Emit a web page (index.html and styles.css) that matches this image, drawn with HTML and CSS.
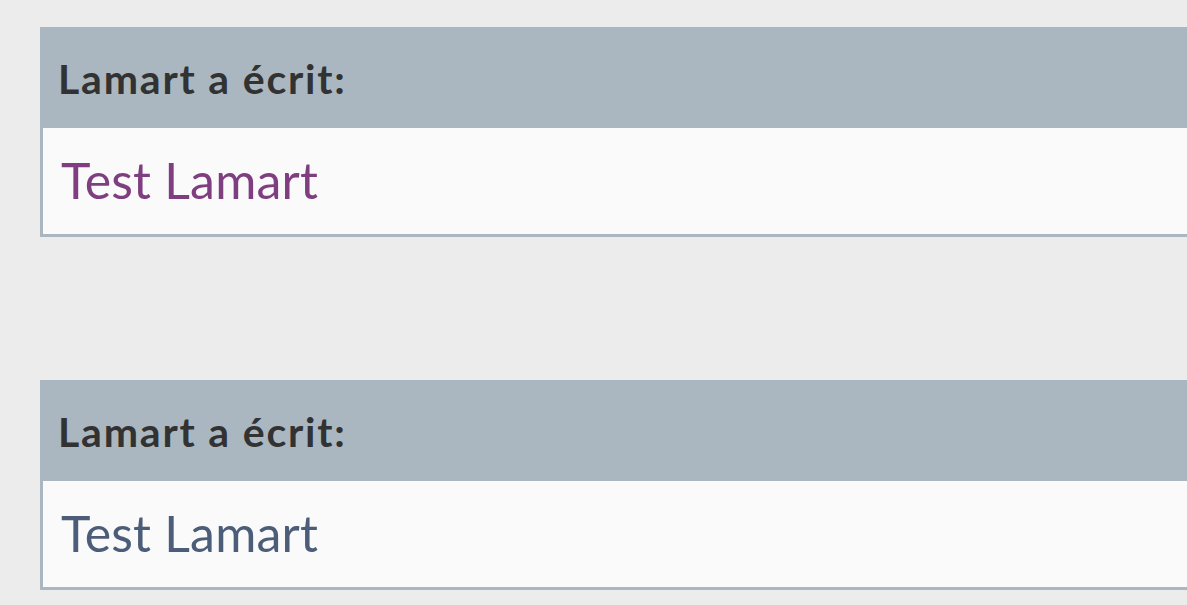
FILE: index.html
```html
<!DOCTYPE html>
<html lang="fr">
<head>
<meta charset="utf-8">
<title>Citations</title>
<link rel="stylesheet" href="styles.css">
</head>
<body>
<div class="page">
  <div class="quote">
    <div class="quote-head">Lamart a écrit:</div>
    <div class="quote-body"><a class="quote-link visited" href="#a">Test Lamart</a></div>
  </div>
  <div class="quote">
    <div class="quote-head">Lamart a écrit:</div>
    <div class="quote-body"><a class="quote-link" href="#b">Test Lamart</a></div>
  </div>
</div>
</body>
</html>
```

FILE: styles.css
```css
html, body {
  margin: 0;
  padding: 0;
  background: #ececec;
}
.page {
  overflow: hidden;
  padding: 27px 0 0 40px;
  height: 578px;
  display: flex;
  flex-direction: column;
  gap: 143px;
  font-family: "Lato", "Open Sans", sans-serif;
}
.quote {
  border: 3px solid #aab7c1;
  margin-right: -12px;
  background: #fafafa;
}
.quote-head {
  background: #aab7c1;
  color: #323232;
  font-weight: 700;
  font-size: 41px;
  letter-spacing: 1.8px;
  line-height: 98px;
  height: 98px;
  padding: 0 15px;
  white-space: nowrap;
}
.quote-body {
  font-size: 50px;
  letter-spacing: 0.2px;
  line-height: 104px;
  height: 104px;
  padding: 0 18px 2px;
  white-space: nowrap;
}
.quote-link {
  color: #4b5d78;
  text-decoration: none;
}
.quote-link.visited {
  color: #7e3e7f;
}
```
